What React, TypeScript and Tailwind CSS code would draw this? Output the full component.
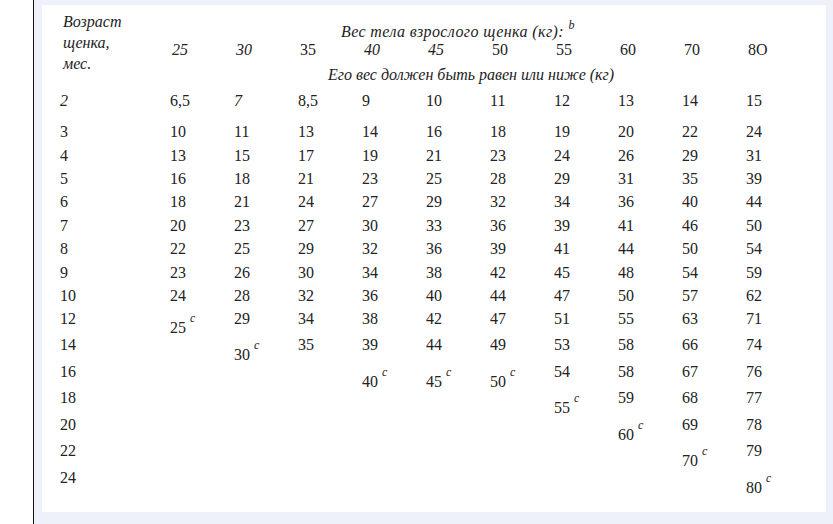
import React from 'react';

type Cell = string | null;

// "25c" means the value is marked with a superscript c (and printed a bit lower)
const ROWS_A: [string, Cell[]][] = [
  ['3', ['10', '11', '13', '14', '16', '18', '19', '20', '22', '24']],
  ['4', ['13', '15', '17', '19', '21', '23', '24', '26', '29', '31']],
  ['5', ['16', '18', '21', '23', '25', '28', '29', '31', '35', '39']],
  ['6', ['18', '21', '24', '27', '29', '32', '34', '36', '40', '44']],
  ['7', ['20', '23', '27', '30', '33', '36', '39', '41', '46', '50']],
  ['8', ['22', '25', '29', '32', '36', '39', '41', '44', '50', '54']],
  ['9', ['23', '26', '30', '34', '38', '42', '45', '48', '54', '59']],
  ['10', ['24', '28', '32', '36', '40', '44', '47', '50', '57', '62']],
  ['12', ['25c', '29', '34', '38', '42', '47', '51', '55', '63', '71']],
];

const ROWS_B: [string, Cell[]][] = [
  ['14', [null, '30c', '35', '39', '44', '49', '53', '58', '66', '74']],
  ['16', [null, null, null, '40c', '45c', '50c', '54', '58', '67', '76']],
  ['18', [null, null, null, null, null, null, '55c', '59', '68', '77']],
  ['20', [null, null, null, null, null, null, null, '60c', '69', '78']],
  ['22', [null, null, null, null, null, null, null, null, '70c', '79']],
  ['24', [null, null, null, null, null, null, null, null, null, '80c']],
];

const HEAD_NUMS: [string, boolean][] = [
  ['25', true],
  ['30', true],
  ['35', false],
  ['40', true],
  ['45', true],
  ['50', false],
  ['55', false],
  ['60', false],
  ['70', false],
  ['8O', false],
];

function Value({ v }: { v: Cell }) {
  if (!v) return <div className="w-[64px]" />;
  if (v.endsWith('c')) {
    return (
      <div className="w-[64px] whitespace-nowrap">
        <span className="align-[-7px]">{v.slice(0, -1)}</span>
        <span className="ml-[4px] align-[4px] text-[12px] italic">c</span>
      </div>
    );
  }
  return <div className="w-[64px]">{v}</div>;
}

function Row({ age, values, tall }: { age: string; values: Cell[]; tall?: boolean }) {
  return (
    <div className={`flex ${tall ? 'h-[26.5px] leading-[26.5px]' : 'h-[23.4px] leading-[23.4px]'}`}>
      <div className="w-[110px]">{age}</div>
      {values.map((v, i) => (
        <Value key={i} v={v} />
      ))}
    </div>
  );
}

export default function App() {
  return (
    <div className="flex h-[524px] w-[833px] bg-white font-['Liberation_Serif',serif] text-[16px] text-[#222]">
      <div className="w-[33px]" />
      <div className="w-px bg-[#111]" />
      <div className="flex-1 bg-[#eef0fa] pt-[5px] pr-[7px] pb-[12px] pl-[8px]">
        <div className="h-full bg-white pt-[6px] pl-[18px]">
          {/* header */}
          <div className="flex h-[78.3px]">
            <div className="w-[110px] pl-[3px] text-[16px] italic leading-[21px]">
              <div>Возраст</div>
              <div>щенка,</div>
              <div>мес.</div>
            </div>
            <div className="flex flex-col">
              <div className="mt-[13px] h-[16px] pl-[171px] text-[16px] italic leading-[16px] tracking-[0.4px] whitespace-nowrap">
                Вес тела взрослого щенка (кг):{' '}
                <span className="align-[8px] text-[12px] leading-[0px]">b</span>
              </div>
              <div className="mt-[1px] flex h-[18px] leading-[18px]">
                {HEAD_NUMS.map(([n, it]) => (
                  <div key={n} className={`w-[64px] pl-[2px] ${it ? 'italic' : ''}`}>
                    {n}
                  </div>
                ))}
              </div>
              <div className="mt-[6px] h-[20px] pl-[158px] text-[16px] italic leading-[20px] whitespace-nowrap">
                Его вес должен быть равен или ниже (кг)
              </div>
            </div>
          </div>

          {/* row for 2 months */}
          <div className="flex h-[23.4px] leading-[23.4px]">
            <div className="w-[110px] italic">2</div>
            <div className="w-[64px]">6,5</div>
            <div className="w-[64px] italic">7</div>
            <div className="w-[64px]">8,5</div>
            <div className="w-[64px]">9</div>
            <div className="w-[64px]">10</div>
            <div className="w-[64px]">11</div>
            <div className="w-[64px]">12</div>
            <div className="w-[64px]">13</div>
            <div className="w-[64px]">14</div>
            <div className="w-[64px]">15</div>
          </div>

          <div className="mt-[7.6px]">
            {ROWS_A.map(([age, values]) => (
              <Row key={age} age={age} values={values} />
            ))}
          </div>
          <div className="mt-[1.5px]">
            {ROWS_B.map(([age, values]) => (
              <Row key={age} age={age} values={values} tall />
            ))}
          </div>
        </div>
      </div>
    </div>
  );
}
